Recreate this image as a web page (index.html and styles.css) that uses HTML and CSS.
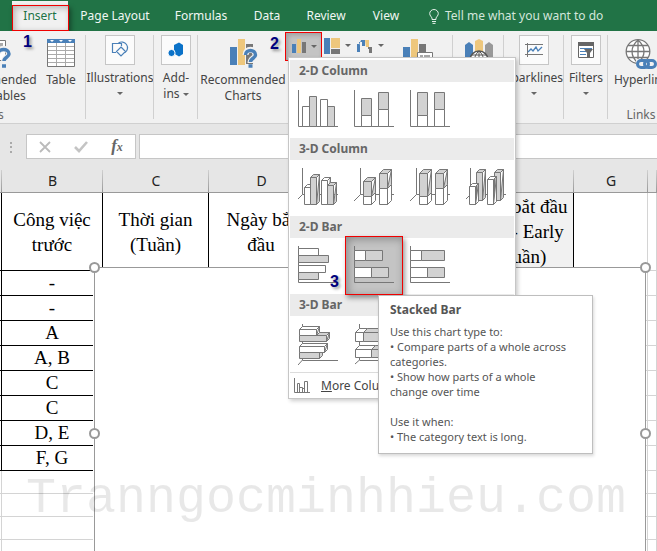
FILE: index.html
```html
<!DOCTYPE html>
<html lang="vi">
<head>
<meta charset="utf-8">
<title>Insert chart</title>
<link rel="stylesheet" href="styles.css">
</head>
<body>
<nav class="tabs">
  <button class="tab tab-active"><span class="mark"></span>Insert</button>
  <button class="tab">Page Layout</button>
  <button class="tab">Formulas</button>
  <button class="tab">Data</button>
  <button class="tab">Review</button>
  <button class="tab">View</button>
  <button class="tab tell">
    <svg width="10" height="15" viewBox="0 0 10 15" fill="none" stroke="#e4f0e9"><path d="M3 10.500V9C2.500 7.800.7 6.600.7 4.600a4.300 4.100 0 0 1 8.600 0C9.300 6.600 7.500 7.800 7 9v1.500zM3 12.500h4M3.500 14.400h3"/></svg>
    Tell me what you want to do
  </button>
</nav>

<div class="ribbon">
  <section class="group g-tables">
    <div class="tools">
      <button class="big">
        <svg width="36" height="30" viewBox="0 0 36 30"><path d="M2.500 1.500h27v20h-27z" fill="#fff" stroke="#777"/><path d="M20 4h7v6h-7z" fill="#aaa"/><path d="M22 15c0-7 11-7 11 0 0 3.500-5 3-5 8" fill="none" stroke="#f1f1f1" stroke-width="6"/><path d="M22 15c0-6 11-6 11 0 0 3.500-5 3-5 7M26 27h4" fill="none" stroke="#4a80b8" stroke-width="3.500"/></svg>
        <span>Recommended<br>PivotTables</span>
      </button>
      <button class="big b-table">
        <svg width="28" height="30" viewBox="0 0 28 30"><path d="M.5 1.500h27v26H.5z" fill="#fff" stroke="#777"/><path d="M0 0h28v4H0z" fill="#4a80b8"/><path d="M3 1h4L5 3zM12 1h4l-2 2zM21 1h4l-2 2z" fill="#fff"/><path d="M1 7.500h26M1 11.500h26M1 15.500h26M1 19.500h26M1 23.500h26M9.500 4v23M18.500 4v23" stroke="#aaa"/></svg>
        <span>Table</span>
      </button>
    </div>
    <div class="caption">Tables</div>
  </section>

  <section class="group g-illus">
    <button class="boxed">
      <span class="frame"><svg width="18" height="18" viewBox="0 0 18 18" fill="none" stroke="#4a80b8" stroke-width="1.200"><path d="M5 11.500H1.500v-9h9V5M7.500 2A5.500 5.500 0 1 1 14 11.500M10 6l4.500 4.500L10 15l-4.500-4.500z"/></svg></span>
      <span>Illustrations</span><i class="caret"></i>
    </button>
    <b class="callout callout-1">1</b>
  </section>

  <section class="group g-addins">
    <button class="boxed">
      <span class="frame"><svg width="16" height="16" viewBox="0 0 16 16" fill="#0b72c8"><path d="M6 3l5-2.500L15 3v9l-4 2.500-5-3z"/><circle cx="3.500" cy="11" r="3.600" stroke="#fff"/></svg></span>
      <span>Add-<br>ins <i class="caret"></i></span>
    </button>
  </section>

  <section class="group g-charts">
    <button class="big b-rec">
      <svg width="30" height="30" viewBox="0 0 30 30"><path d="M2 8h7v18H2z" fill="#4a80b8"/><path d="M10 0h7v26h-7z" fill="#eec77c"/><path d="M18 5h7v20h-7z" fill="#777"/><path d="M17.500 16c0-7 10-7 10 0 0 3.500-5 3-5 8" fill="none" stroke="#f1f1f1" stroke-width="6"/><path d="M17.500 16c0-6 10-6 10 0 0 3.500-5 3-5 7M20.500 27h4" fill="none" stroke="#4a80b8" stroke-width="3.500"/></svg>
      <span>Recommended<br>Charts</span>
      <b class="callout callout-2">2</b>
    </button>
    <div class="gallery">
      <button class="mini mini-on" aria-label="Column or bar chart"><svg width="14" height="16" viewBox="0 0 14 16"><path d="M0 6h4v9H0z" fill="#4a80b8"/><path d="M5 1h4v14H5z" fill="#eec77c"/><path d="M10 4h4v11h-4z" fill="#777"/></svg><i class="caret"></i></button>
      <button class="mini" aria-label="Hierarchy chart"><svg width="16" height="16" viewBox="0 0 16 16"><path d="M0 0h6v16H0z" fill="#4a80b8"/><path d="M7 0h9v10H7z" fill="#eec77c"/><path d="M7 11h9v5H7z" fill="#777"/></svg><i class="caret"></i></button>
      <button class="mini" aria-label="Waterfall chart"><svg width="16" height="16" viewBox="0 0 16 16"><path d="M0 6h3v8H0zM4 2h4v6H5V4H2v3z" fill="#4a80b8"/><path d="M8 2h4v7H9z" fill="#eec77c"/><path d="M11 9h4v6h-3v-4h-1z" fill="#777"/></svg><i class="caret"></i></button>

      <div class="menu">
        <h2>2-D Column</h2>
        <div class="items">
          <button class="item" aria-label="Clustered column"><svg class="chart" viewBox="0 0 40 42"><path d="M.5 0v36.500H40"/><path class="w" d="M4.500 16.500h7v20h-7zM22.500 9.500h7v27h-7z"/><path class="g" d="M11.500 6.500h7v30h-7zM29.500 16.500h7v20h-7z"/></svg></button>
          <button class="item" aria-label="Stacked column"><svg class="chart" viewBox="0 0 40 42"><path d="M.5 0v36.500H40"/><path class="w" d="M7.500 25.500h10v11h-10zM24.500 19.500h10v17h-10z"/><path class="g" d="M7.500 8.500h10v17h-10zM24.500 2.500h10v17h-10z"/></svg></button>
          <button class="item" aria-label="100% stacked column"><svg class="chart" viewBox="0 0 40 42"><path d="M.5 0v36.500H40"/><path class="w" d="M7.500 25.500h10v11h-10zM24.500 19.500h10v17h-10z"/><path class="g" d="M7.500 2.500h10v23h-10zM24.500 2.500h10v17h-10z"/></svg></button>
        </div>
        <h2>3-D Column</h2>
        <div class="items">
          <button class="item" aria-label="3-D clustered column"><svg class="chart" viewBox="0 0 40 42"><path d="M4.500 0v26.500L0 31M4.500 26.500H40"/><path class="w" d="M6.500 19.500h6v17h-6zl3-3h6l-3 3M23.500 12.500h6v24h-6zl3-3h6l-3 3m3-3v24l-3 3z"/><path class="g" d="M12.500 9.500h6v27h-6zl3-3h6l-3 3m3-3v27l-3 3zM29.500 17.500h6v19h-6zl3-3h6l-3 3m3-3v19l-3 3z"/></svg></button>
          <button class="item" aria-label="3-D stacked column"><svg class="chart" viewBox="0 0 40 42"><path d="M6.500 0v26.500L0 33M6.500 26.500H40"/><path class="w" d="M9.500 28.500h8v8h-8zM17.500 28.500l4-4v8l-4 4zM25.500 20.500h8v16h-8zM33.500 20.500l4-4v16l-4 4z"/><path class="g" d="M9.500 13.500h8v15h-8zl4-4h8l-4 4m4-4v15l-4 4zM25.500 5.500h8v15h-8zl4-4h8l-4 4m4-4v15l-4 4z"/></svg></button>
          <button class="item" aria-label="3-D 100% stacked column"><svg class="chart" viewBox="0 0 40 42"><path d="M6.500 0v26.500L0 33M6.500 26.500H40"/><path class="w" d="M9.500 28.500h8v8h-8zM17.500 28.500l4-4v8l-4 4zM25.500 20.500h8v16h-8zM33.500 20.500l4-4v16l-4 4z"/><path class="g" d="M9.500 5.500h8v23h-8zl4-4h8l-4 4m4-4v23l-4 4zM25.500 5.500h8v15h-8zl4-4h8l-4 4m4-4v15l-4 4z"/></svg></button>
          <button class="item" aria-label="3-D column"><svg class="chart" viewBox="0 0 40 42"><path d="M4.500 0v26.500L0 31M4.500 26.500H40"/><path class="g" d="M10.500 4.500h6v28h-6zl3-3h6l-3 3m3-3v28l-3 3zM28.500 4.500h6v28h-6zl3-3h6l-3 3m3-3v28l-3 3z"/><path class="w" d="M3.500 18.500h6v18h-6zl3-3h6l-3 3m3-3v18l-3 3zM21.500 11.500h6v25h-6zl3-3h6l-3 3m3-3v25l-3 3z"/></svg></button>
        </div>
        <h2>2-D Bar</h2>
        <div class="items">
          <button class="item" aria-label="Clustered bar"><svg class="chart" viewBox="0 0 40 42"><path d="M.5 0v36.500H40"/><path class="w" d="M.5 2.500h20v7H.5zM.5 19.500h27v7H.5z"/><path class="g" d="M.5 9.500h30v7H.5zM.5 26.500h20v7H.5z"/></svg><b class="callout callout-3">3</b></button>
          <div class="pick">
            <button class="item item-on" aria-label="Stacked bar"><svg class="chart" viewBox="0 0 40 42"><path d="M.5 0v36.500H40"/><path class="w" d="M.5 4.500h11v10H.5zM.5 21.500h17v10H.5z"/><path class="g" d="M11.500 4.500h17v10h-17zM17.500 21.500h17v10h-17z"/></svg></button>
            <div class="tooltip" role="tooltip">
              <h3>Stacked Bar</h3>
              <p>Use this chart type to:<br>• Compare parts of a whole across categories.<br>• Show how parts of a whole<br>change over time</p>
              <p>Use it when:<br>• The category text is long.</p>
            </div>
          </div>
          <button class="item" aria-label="100% stacked bar"><svg class="chart" viewBox="0 0 40 42"><path d="M.5 0v36.500H40"/><path class="w" d="M.5 4.500h11v10H.5zM.5 21.500h17v10H.5z"/><path class="g" d="M11.500 4.500h23v10h-23zM17.500 21.500h17v10h-17z"/></svg></button>
        </div>
        <h2>3-D Bar</h2>
        <div class="items">
          <button class="item" aria-label="3-D clustered bar"><svg class="chart" viewBox="0 0 40 42"><path d="M4.500 0v36L0 41M4.500 36.500H40"/><path class="w" d="M1.500 5.500h17v6h-17zl3-3h17l-3 3m3-3v6l-3 3zM1.500 22.500h25v6h-25zl3-3h25l-3 3m3-3v6l-3 3z"/><path class="g" d="M1.500 11.500h27v6h-27zM18.500 11.500l3-3h10l-3 3m3-3v6l-3 3zM1.500 28.500h20v6h-20zM21.500 28.500h3v3l-3 3z"/></svg></button>
          <button class="item" aria-label="3-D stacked bar"><svg class="chart" viewBox="0 0 40 42"><path d="M5.500 0v36L1 40M5.500 36.500H40"/><path class="w" d="M1.500 8.500h8v9h-8zl4-4h8l-4 4M1.500 25.500h16v8h-16zl4-4h16l-4 4"/><path class="g" d="M9.500 8.500h17v9h-17zl4-4h17l-4 4m4-4v9l-4 4zM17.500 25.500h17v8h-17zl4-4h17l-4 4m4-4v8l-4 4z"/></svg></button>
        </div>
        <button class="more"><svg width="16" height="16" viewBox="0 0 16 16" fill="none" stroke="#777"><path d="M.5 0v14.500H16M3.500 14V5.500h2V14M5.500 9.500h3V14M8.500 10.500h2V14M10.500 14V3.500h3V14"/></svg><span><u>M</u>ore Column Charts...</span></button>
      </div>
    </div>
    <button class="big b-pivot" aria-label="PivotChart"><svg width="30" height="30" viewBox="0 0 30 30"><path d="M0 8h7v18H0z" fill="#4a80b8"/><path d="M8 0h7v26H8z" fill="#eec77c"/><path d="M16 5h7v20h-7z" fill="#777"/><path d="M14.500 13.500h15v15h-15z" fill="#fff" stroke="#777"/><path d="M17 16h3v3h-3zM21 16h6v3h-6z" fill="#aaa"/></svg></button>
  </section>

  <section class="group g-maps">
    <button class="big" aria-label="3D Map"><svg width="30" height="30" viewBox="0 0 30 30"><path d="M1 6l4-3 4 3v20H1z" fill="#4a80b8"/><path d="M11 2l4-2 4 2v20h-8z" fill="#eec77c"/><path d="M21 6l4-3 4 3v20h-8z" fill="#999"/><circle cx="15" cy="21" r="9" fill="#fff" stroke="#555" stroke-width="1.500"/><path d="M15 12v18M6 21h18M8 16h14M15 12c-6 5-6 13 0 18M15 12c6 5 6 13 0 18" fill="none" stroke="#555"/></svg></button>
  </section>

  <section class="group g-spark">
    <button class="boxed">
      <span class="frame"><svg width="18" height="14" viewBox="0 0 18 14" fill="none"><path d="M0 1.500h18M0 11.500h18M2.500 0v14" stroke="#777"/><path d="M3 9l3-3 2 2 3-4 2 4 4-4" stroke="#4a80b8" stroke-width="1.300"/></svg></span>
      <span>Sparklines</span><i class="caret"></i>
    </button>
  </section>

  <section class="group g-filters">
    <button class="boxed">
      <span class="frame"><svg width="16" height="16" viewBox="0 0 16 16"><path d="M.5.500h15v15H.5z" fill="#fff" stroke="#666"/><path d="M0 0h16v4H0z" fill="#666"/><path d="M2 6h12v1H2zM2 9h6v1H2zM2 12h6v1H2z" fill="#4a80b8"/><path d="M6 7h9l-3 4v4h-3v-4z" fill="#666"/></svg></span>
      <span>Filters</span><i class="caret"></i>
    </button>
  </section>

  <section class="group g-links">
    <button class="big">
      <svg width="32" height="30" viewBox="0 0 32 30" fill="none"><g stroke="#777" stroke-width="1.300"><circle cx="13" cy="12.500" r="11.800" fill="#fff"/><path d="M13 1v23M1 12.500h24M3 6.500h20M3 18.500h20M13 1c-8 7-8 16 0 23M13 1c8 7 8 16 0 23"/></g><path d="M11 20h21v10H11z" fill="#f1f1f1"/><g stroke="#4a80b8" stroke-width="3"><rect x="12.500" y="21.500" width="11" height="7" rx="3.500"/><rect x="19.500" y="21.500" width="11" height="7" rx="3.500"/></g></svg>
      <span>Hyperlink</span>
    </button>
    <div class="caption">Links</div>
  </section>
</div>

<div class="formula">
  <svg class="grip" width="2" height="12" viewBox="0 0 2 12" fill="#aaa"><path d="M0 0h2v2H0zM0 4h2v2H0zM0 9h2v2H0z"/></svg>
  <div class="fx">
    <button aria-label="Cancel"><svg width="12" height="12" viewBox="0 0 12 12" stroke="#bbb" stroke-width="1.800"><path d="M1 1l10 10M11 1L1 11"/></svg></button>
    <button aria-label="Enter"><svg width="14" height="12" viewBox="0 0 14 12" fill="none" stroke="#c4c4c4" stroke-width="2.600"><path d="M1 6l4 4 8-9"/></svg></button>
    <button class="fn">f<small>x</small></button>
  </div>
  <input class="entry" type="text" aria-label="Formula bar">
</div>

<main class="sheet">
  <table>
    <colgroup><col class="ca"><col class="cb"><col class="cc"><col class="cd"><col class="ce"><col class="cf"><col class="cg"><col></colgroup>
    <thead><tr><th></th><th>B</th><th>C</th><th>D</th><th></th><th></th><th>G</th><th></th></tr></thead>
    <tbody>
      <tr class="head"><td class="k"></td><td class="k">Công việc trước</td><td class="k">Thời gian (Tuần)</td><td class="k">Ngày bắt đầu</td><td class="k"></td><td class="k shade">Thời gian bắt đầu sớm nhất - Early Start (Tuần)</td><td></td><td></td></tr>
      <tr><td class="k"></td><td class="k">-</td><td></td><td></td><td></td><td></td><td></td><td></td></tr>
      <tr><td class="k"></td><td class="k">-</td><td></td><td></td><td></td><td></td><td></td><td></td></tr>
      <tr><td class="k"></td><td class="k">A</td><td></td><td></td><td></td><td></td><td></td><td></td></tr>
      <tr><td class="k"></td><td class="k">A, B</td><td></td><td></td><td></td><td></td><td></td><td></td></tr>
      <tr><td class="k"></td><td class="k">C</td><td></td><td></td><td></td><td></td><td></td><td></td></tr>
      <tr><td class="k"></td><td class="k">C</td><td></td><td></td><td></td><td></td><td></td><td></td></tr>
      <tr><td class="k"></td><td class="k">D, E</td><td></td><td></td><td></td><td></td><td></td><td></td></tr>
      <tr><td class="k"></td><td class="k">F, G</td><td></td><td></td><td></td><td></td><td></td><td></td></tr>
      <tr class="plain"><td></td><td></td><td></td><td></td><td></td><td></td><td></td><td></td></tr>
      <tr class="plain"><td></td><td></td><td></td><td></td><td></td><td></td><td></td><td></td></tr>
      <tr class="plain"><td></td><td></td><td></td><td></td><td></td><td></td><td></td><td></td></tr>
      <tr class="plain"><td></td><td></td><td></td><td></td><td></td><td></td><td></td><td></td></tr>
    </tbody>
  </table>
  <div class="canvas"><i class="knob tl"></i><i class="knob tr"></i><i class="knob ml"></i><i class="knob mr"></i></div>
  <div class="watermark">Tranngocminhhieu.com</div>
</main>
</body>
</html>
```
FILE: styles.css
```css
* { box-sizing: border-box; }
html, body { height: 100%; }
body {
  margin: 0;
  display: flex;
  flex-direction: column;
  overflow: hidden;
  background: #fff;
  color: #444;
  font: 12px/16px "Noto Sans", "Open Sans", sans-serif;
}
button {
  padding: 0;
  border: 0;
  background: none;
  color: inherit;
  font: inherit;
}
svg { display: block; flex: none; }
h2, h3, p { margin: 0; }

/* Tab strip */
.tabs {
  display: grid;
  grid-template-columns: 56px 94px 78px 54px 64px 56px 1fr;
  flex: none;
  height: 31px;
  padding: 1px 0 0 12px;
  background: #217346;
}
.tab { position: relative; color: #f0f7f3; white-space: nowrap; }
.tab-active { background: #f1f1f1; color: #217346; }
.mark {
  position: absolute;
  inset: 4px -1px 0 0;
  border: 1px solid #f00000;
  box-shadow: 2px 3px 5px rgba(0, 0, 0, .4), inset 2px 2px 6px rgba(0, 0, 0, .25);
}
.tell { display: flex; align-items: center; gap: 6px; padding-left: 15px; color: #d3e6db; }

/* Ribbon */
.ribbon {
  position: relative;
  z-index: 2;
  display: flex;
  flex: none;
  height: 93px;
  background: #f1f1f1;
  border-bottom: 1px solid #d0d0d0;
}
.group { position: relative; flex: none; padding-top: 4px; }
.group::after {
  content: "";
  position: absolute;
  top: 4px;
  right: 0;
  width: 1px;
  height: 84px;
  background: #d0d0d0;
}
.g-tables { width: 200px; margin-left: -114px; }
.g-illus { width: 68px; }
.g-addins { width: 44px; }
.g-charts { width: 255px; display: flex; align-items: flex-start; padding-top: 1px; }
.g-maps { width: 51px; }
.g-spark { width: 60px; }
.g-filters { width: 44px; }
.g-links { width: 66px; }
.g-links::after { display: none; }
.tools { display: flex; justify-content: flex-end; }
.big {
  position: relative;
  display: flex;
  flex-direction: column;
  align-items: center;
  gap: 3px;
  width: 100%;
  padding-top: 4px;
  white-space: nowrap;
}
.tools .big { width: 84px; }
.tools .b-table { width: 50px; }
.caption { position: absolute; top: 76px; left: 0; width: 100%; text-align: center; color: #666; }
.boxed { display: flex; flex-direction: column; align-items: center; width: 100%; }
.frame {
  display: flex;
  align-items: center;
  justify-content: center;
  width: 30px;
  height: 30px;
  margin-bottom: 5px;
  border: 1px solid #c6c6c6;
  background: #fbfbfb;
}
.caret {
  display: inline-block;
  border: solid transparent;
  border-width: 3px 3px 0;
  border-top-color: #666;
  vertical-align: middle;
}
.boxed > .caret { margin-top: 6px; }
.g-charts .b-rec { flex: none; width: 84px; padding-top: 7px; margin-left: 3px; }
.g-charts .b-pivot { flex: none; width: 30px; padding-top: 7px; margin-left: 15px; }
.callout {
  position: absolute;
  color: #00007e;
  font: bold 16px/16px "Liberation Sans", Arial, sans-serif;
  text-shadow: 2px 2px 3px rgba(0, 0, 0, .4);
}
.callout-1 { left: -63px; top: 3px; }
.callout-2 { left: 69px; top: 4px; }
.callout-3 { left: 40px; top: 36px; }

/* Chart gallery */
.gallery { position: relative; display: flex; }
.mini { display: flex; align-items: center; gap: 5px; width: 33px; height: 27px; padding-left: 2px; }
.mini-on {
  width: 37px;
  height: 29px;
  padding: 0 0 1px 6px;
  border: 1px solid #f00000;
  background: #c4c4c4;
  box-shadow: inset 2px 2px 5px rgba(0, 0, 0, .2);
}
.menu {
  position: absolute;
  top: 25px;
  left: 3px;
  z-index: 3;
  width: 228px;
  padding: 2px 1px 0;
  border: 1px solid #c6c6c6;
  background: #fff;
  box-shadow: 2px 2px 4px rgba(0, 0, 0, .2);
}
.menu h2 { height: 22px; padding-left: 9px; background: #ebebeb; color: #666; font-size: 12px; line-height: 21px; }
.items { display: flex; height: 56px; }
.item { position: relative; width: 56px; height: 56px; padding: 8px 8px 6px; }
.item .chart { width: 40px; height: 42px; fill: none; stroke: #777; }
.chart .w { fill: #fff; }
.chart .g { fill: #d2d2d2; }
.pick { position: relative; width: 56px; }
.pick .item-on {
  width: 58px;
  height: 59px;
  margin: -2px -1px;
  padding: 9px 8px;
  border: 1px solid #f00000;
  background: #c4c4c4;
  box-shadow: 2px 3px 5px rgba(0, 0, 0, .4), inset 2px 2px 8px rgba(0, 0, 0, .3);
}
.tooltip {
  position: absolute;
  top: 57px;
  left: 32px;
  z-index: 4;
  width: 215px;
  padding: 6px 11px 9px;
  border: 1px solid #bebebe;
  background: #fff;
  color: #555;
  font-size: 11px;
  line-height: 15px;
  box-shadow: 1px 2px 3px rgba(0, 0, 0, .15);
}
.tooltip h3 { margin-bottom: 6px; font-size: 12px; line-height: 16px; }
.tooltip p + p { margin-top: 15px; }
.more {
  display: flex;
  align-items: center;
  gap: 11px;
  width: 100%;
  height: 26px;
  padding-left: 4px;
  border-top: 1px solid #dcdcdc;
  white-space: nowrap;
}

/* Formula bar */
.formula { display: flex; flex: none; gap: 3px; height: 46px; padding: 10px 0 11px 10px; background: #e6e6e6; }
.grip { margin: 8px 11px 0 0; }
.fx {
  display: grid;
  grid-template-columns: repeat(3, 36px);
  place-items: center;
  width: 110px;
  border: 1px solid #c6c6c6;
  background: #fff;
}
.fn { color: #666; font: italic bold 17px/17px "Liberation Serif", serif; }
.fn small { font-size: 12px; }
.entry { flex: 1; min-width: 0; border: 1px solid #c6c6c6; border-right: 0; background: #fff; }

/* Worksheet */
.sheet { position: relative; flex: 1; min-height: 0; overflow: hidden; }
table { width: 100%; table-layout: fixed; border-collapse: separate; border-spacing: 0; }
.ca { width: 2px; }
.cb { width: 101px; }
.cc { width: 106px; }
.cd { width: 105px; }
.ce { width: 114px; }
.cf { width: 146px; }
.cg { width: 74px; }
th {
  height: 23px;
  padding: 0;
  border-bottom: 1px solid #999;
  background: linear-gradient(#d0d0d0, #999) right / 1px 100% no-repeat #e6e6e6;
  color: #222;
  font-size: 14px;
  font-weight: normal;
  line-height: 20px;
}
td {
  height: 25px;
  padding: 0;
  border: solid #d4d4d4;
  border-width: 0 1px 1px 0;
  color: #000;
  font: 19px/24px "Liberation Serif", "Times New Roman", serif;
  text-align: center;
}
td.k { border-color: #000; }
.head td { height: 78px; padding: 0 4px; line-height: 25px; }
.head td:first-child { padding: 0; }
.head td:nth-child(2), .head td:nth-child(3), .head td:nth-child(4) { padding: 0 10px; }
td.shade { background: #f1f1f1; }
.plain td { height: 23px; }
.canvas {
  position: absolute;
  top: 97px;
  left: 94px;
  right: 11px;
  bottom: 0;
  border: 1px solid #999;
  border-bottom: 0;
  background: #fff;
  box-shadow: -1px 0 0 #fff;
}
.knob { position: absolute; width: 11px; height: 11px; border: 2px solid #999; border-radius: 50%; background: #fff; }
.tl { top: -6px; left: -6px; }
.tr { top: -6px; right: -6px; }
.ml { top: 160px; left: -6px; }
.mr { top: 160px; right: -6px; }
.watermark {
  position: absolute;
  top: 301px;
  left: 26px;
  color: rgba(0, 0, 0, .09);
  font: 50px/56px "Liberation Mono", monospace;
}
```
